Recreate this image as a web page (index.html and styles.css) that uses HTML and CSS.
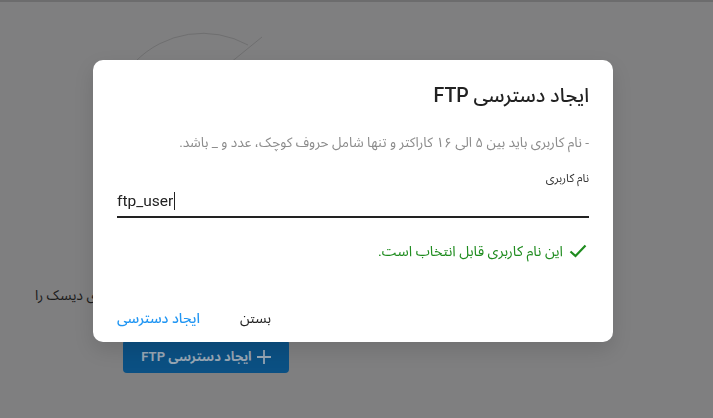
FILE: index.html
```html
<!DOCTYPE html>
<html lang="fa" dir="rtl">
<head>
<meta charset="utf-8">
<title>ایجاد دسترسی FTP</title>
<link rel="stylesheet" href="styles.css">
</head>
<body>
<div class="page">
  <div class="topbar"></div>
  <div class="content">
    <svg class="illus" width="200" height="30" viewBox="0 0 200 30">
      <path d="M15 32 A94 94 0 0 1 128 15" fill="none" stroke="#6f6f70" stroke-width="1"/>
      <path d="M110 33 L142 7" fill="none" stroke="#6f6f70" stroke-width="1"/>
    </svg>
    <p class="bg-text">برای دسترسی به فایل‌ها از طریق FTP ابتدا یک کاربر بسازید تا بتوانید فضای دیسک را</p>
    <div class="bg-btn">
      <svg width="14" height="14" viewBox="0 0 14 14"><path d="M7 0v14M0 7h14" stroke="#97a6b4" stroke-width="1.8"/></svg>
      <span>ایجاد دسترسی FTP</span>
    </div>
  </div>
</div>

<div class="modal" role="dialog">
  <h2 class="title">ایجاد دسترسی FTP</h2>
  <p class="hint">- نام کاربری باید بین ۵ الی ۱۶ کاراکتر و تنها شامل حروف کوچک، عدد و _ باشد.</p>
  <div class="field">
    <label class="label">نام کاربری</label>
    <div class="input"><span class="value">ftp_user</span><span class="caret"></span></div>
  </div>
  <div class="success">
    <svg width="18" height="14" viewBox="0 0 18 14"><path d="M1.5 7.5 L6.5 12 L16.5 1.5" fill="none" stroke="#1f8c1f" stroke-width="2.2"/></svg>
    <span>این نام کاربری قابل انتخاب است.</span>
  </div>
  <div class="actions">
    <button class="btn btn-close">بستن</button>
    <button class="btn btn-primary">ایجاد دسترسی</button>
  </div>
</div>
</body>
</html>
```
FILE: styles.css
```css
html, body {
  margin: 0;
  padding: 0;
}
body {
  width: 713px;
  height: 418px;
  overflow: hidden;
  background: #7f7f80;
  font-family: Roboto, "Noto Sans Arabic", "Vazirmatn", "DejaVu Sans", sans-serif;
}
.page {
  height: 418px;
}
.topbar {
  height: 2px;
  background: #6c6c6d;
}
.content {
  display: flex;
  flex-direction: column;
  align-items: flex-end;
}
.illus {
  display: block;
  margin-top: 28px;
  margin-left: 120px;
  overflow: visible;
}
.bg-text {
  margin: 225px 0 0 0;
  padding-left: 35px;
  font-size: 14px;
  line-height: 20px;
  color: #1b1b1b;
  white-space: nowrap;
}
.bg-btn {
  margin-top: 35px;
  margin-left: 123px;
  width: 166px;
  height: 33px;
  box-sizing: border-box;
  border-radius: 4px;
  background: #0b5083;
  color: #97a6b4;
  font-weight: bold;
  font-size: 13px;
  display: flex;
  align-items: center;
  justify-content: center;
  gap: 5px;
}
.modal {
  position: fixed;
  left: 93px;
  top: 60px;
  width: 520px;
  height: 282px;
  box-sizing: border-box;
  background: #fff;
  border-radius: 10px;
  padding: 24px 24px 0 24px;
  box-shadow: 0 8px 20px rgba(0,0,0,0.12);
}
.title {
  margin: 0;
  font-size: 19.5px;
  line-height: 24px;
  font-weight: 500;
  color: #222;
}
.hint {
  margin: 24px 0 0 0;
  font-size: 13.6px;
  line-height: 20px;
  color: #8b8b8b;
}
.field {
  margin-top: 18px;
}
.label {
  display: block;
  font-size: 11.5px;
  line-height: 16px;
  color: #333;
}
.input {
  direction: ltr;
  display: flex;
  align-items: center;
  padding: 3px 0 3px 0;
  height: 24px;
  border-bottom: 2px solid #222;
  font-size: 15.5px;
  color: #222;
  font-family: Roboto, sans-serif;
}
.caret {
  display: inline-block;
  width: 1px;
  height: 18px;
  background: #222;
  margin-left: 1px;
}
.success {
  margin-top: 23px;
  display: flex;
  align-items: center;
  gap: 6px;
  padding-right: 2px;
  height: 20px;
  font-size: 14.3px;
  color: #1f8c1f;
}
.actions {
  margin-top: 39px;
  margin-left: -8px;
  display: flex;
  justify-content: flex-end;
  gap: 24px;
}
.btn {
  background: none;
  border: none;
  height: 36px;
  padding: 0 8px;
  font-family: inherit;
  font-size: 14px;
  cursor: pointer;
}
.btn-close {
  color: #222;
}
.btn-primary {
  color: #2196f3;
  font-weight: 500;
}
```
